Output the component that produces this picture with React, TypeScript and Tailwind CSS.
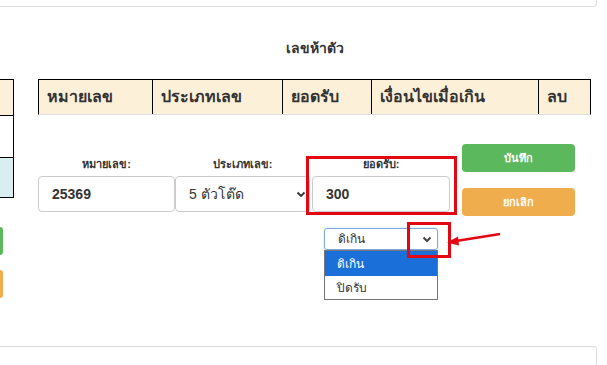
export default function App() {
  const cols = [
    { label: 'หมายเลข', w: 'w-[114px]' },
    { label: 'ประเภทเลข', w: 'w-[130px]' },
    { label: 'ยอดรับ', w: 'w-[89px]' },
    { label: 'เงื่อนไขเมื่อเกิน', w: 'w-[167px]' },
  ];

  return (
    <div className="relative w-[607px] h-[365px] overflow-hidden bg-white text-[#333] font-['Liberation_Sans','DejaVu_Sans',sans-serif]">
      {/* top card edge */}
      <div className="w-[597px] h-[7px] border-b border-r border-[#dddddd] rounded-br-[4px]" />

      <div className="flex">
        {/* left panel (cut off) */}
        <div className="w-[14px] pt-[72px] flex flex-col">
          <div className="h-[36px] bg-[#fdf0d9] border-t border-r border-black" />
          <div className="h-[42px] bg-white border-t border-r border-black" />
          <div className="h-[41px] bg-[#d9eef0] border-t border-b border-r border-black" />
          <div className="mt-[29px] w-[3px] h-[28px] bg-[#5cb85c] rounded-r-[3px]" />
          <div className="mt-[15px] w-[3px] h-[28px] bg-[#f0ad4e] rounded-r-[3px]" />
        </div>

        {/* main */}
        <div className="ml-[24px] w-[553px]">
          <div className="mt-[33px] text-center text-[14px] leading-[16px] font-bold">เลขห้าตัว</div>

          <div className="mt-[23px] flex h-[36px] bg-[#fdf0d9] border-t border-l border-r border-black border-b-[#dddddd] border-b">
            {cols.map((c) => (
              <div key={c.label} className={`${c.w} border-r border-black pl-[8px] flex items-center text-[16px] font-bold`}>
                {c.label}
              </div>
            ))}
            <div className="flex-1 pl-[8px] flex items-center text-[16px] font-bold">ลบ</div>
          </div>

          {/* form row */}
          <div className="mt-[29px] flex">
            <div className="flex mt-[13px]">
              <div className="w-[137px] flex flex-col">
                <label className="text-center text-[11px] leading-[14px] font-bold">หมายเลข:</label>
                <div className="mt-[5px] h-[36px] rounded-[4px] border border-[#cccccc] flex items-center pl-[13px] text-[14px] font-bold">
                  25369
                </div>
              </div>
              <div className="w-[135px] flex flex-col">
                <label className="text-center text-[11px] leading-[14px] font-bold">ประเภทเลข:</label>
                <div className="mt-[5px] h-[36px] rounded-[4px] border border-[#cccccc] flex items-center justify-between pl-[13px] pr-[3px] text-[14px]">
                  <span>5 ตัวโต๊ด</span>
                  <svg width="10" height="10" viewBox="0 0 10 10">
                    <path d="M1.5 3.5 L5 7 L8.5 3.5" fill="none" stroke="#333" strokeWidth="1.8" />
                  </svg>
                </div>
              </div>
              <div className="ml-[2px] w-[138px] flex flex-col">
                <label className="text-center text-[11px] leading-[14px] font-bold">ยอดรับ:</label>
                <div className="mt-[5px] h-[36px] rounded-[4px] border border-[#cccccc] flex items-center pl-[13px] text-[14px] font-bold">
                  300
                </div>
              </div>
            </div>
            <div className="ml-[12px] w-[113px] flex flex-col gap-[16px]">
              <button className="h-[28px] rounded-[4px] bg-[#5cb85c] text-white text-[11px] font-bold">บันทึก</button>
              <button className="h-[28px] rounded-[4px] bg-[#f0ad4e] text-white text-[11px] font-bold">ยกเลิก</button>
            </div>
          </div>

          {/* small select */}
          <div className="relative mt-[12px] ml-[286px] w-[114px]">
            <div className="h-[22px] rounded-[3px] border border-[#82a9d9] flex items-center justify-between pl-[13px] pr-[5px] text-[12px] shadow-[0_0_2px_rgba(102,175,233,0.5)]">
              <span>ดิเกิน</span>
              <svg width="10" height="10" viewBox="0 0 10 10">
                <path d="M1.5 3.5 L5 7 L8.5 3.5" fill="none" stroke="#444" strokeWidth="2" />
              </svg>
            </div>
            <div className="absolute left-0 top-[22px] w-[114px] border border-[#767676] bg-white text-[12px]">
              <div className="h-[25px] bg-[#1a6fd8] text-white flex items-center pl-[12px]">ดิเกิน</div>
              <div className="h-[23px] flex items-center pl-[12px]">ปิดรับ</div>
            </div>
          </div>
        </div>
      </div>

      {/* bottom card edge */}
      <div className="mt-[48px] w-[597px] h-[20px] border-t border-r border-[#dddddd] rounded-tr-[4px]" />

      {/* annotations */}
      <div className="absolute left-[306px] top-[156px] w-[151px] h-[59px] border-[3px] border-[#e30613]" />
      <div className="absolute left-[407px] top-[222px] w-[44px] h-[36px] border-[3px] border-[#e30613]" />
      <svg className="absolute left-[440px] top-[226px]" width="66" height="24" viewBox="0 0 66 24">
        <line x1="60" y1="8" x2="16" y2="15" stroke="#e30613" strokeWidth="2.5" />
        <polygon points="7,16.5 18,10.5 19,19.5" fill="#e30613" />
      </svg>
    </div>
  );
}
